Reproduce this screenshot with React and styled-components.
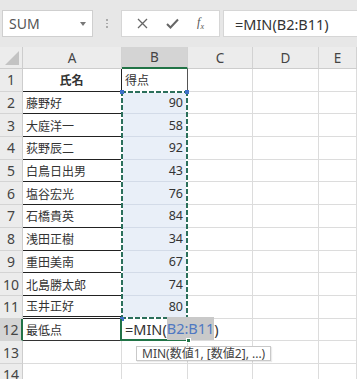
import React from "react";
import styled, { createGlobalStyle } from "styled-components";

const Global = createGlobalStyle`
  html, body { margin: 0; padding: 0; }
  body { font-family: "Noto Sans", "Noto Sans CJK JP", sans-serif; overflow: hidden; }
`;

const Page = styled.div`
  width: 357px;
  height: 379px;
  background: #e7e7e7;
  overflow: hidden;
  font-family: "Noto Sans", "Noto Sans CJK JP", sans-serif;
`;

const Bar = styled.div`
  display: flex;
  align-items: stretch;
  height: 27px;
  padding: 10px 0 0 2px;
`;

const NameBox = styled.div`
  box-sizing: border-box;
  width: 91px;
  display: flex;
  align-items: center;
  justify-content: space-between;
  padding: 0 6px 0 6px;
  background: #fff;
  border: 1px solid #cfcfcf;
  font-size: 14px;
  color: #555;
`;

const Caret = styled.span`
  width: 0;
  height: 0;
  border-left: 3px solid transparent;
  border-right: 3px solid transparent;
  border-top: 4px solid #777;
`;

const Grip = styled.div`
  width: 28px;
  display: flex;
  flex-direction: column;
  align-items: center;
  justify-content: center;
  gap: 2px;
  & > i { width: 1.5px; height: 1.5px; background: #aaa; display: block; }
`;

const Buttons = styled.div`
  box-sizing: border-box;
  width: 99px;
  display: flex;
  align-items: center;
  justify-content: space-around;
  padding: 0 6px;
  background: #fff;
  border: 1px solid #d6d6d6;
  color: #666;
`;

const Fx = styled.span`
  font-family: "Liberation Serif", serif;
  font-style: italic;
  font-size: 12px;
  color: #555;
  & > sub { font-size: 8px; }
`;

const Input = styled.div`
  box-sizing: border-box;
  flex: 1;
  margin-left: 3px;
  display: flex;
  align-items: center;
  padding-left: 11px;
  background: #fff;
  border: 1px solid #d6d6d6;
  border-right: none;
  font-size: 14.5px;
  color: #333;
`;

const Sheet = styled.div`
  margin-top: 10px;
  display: grid;
  grid-template-columns: 23px 99px 66px 65px 66px 1fr;
  grid-template-rows: 22px repeat(14, 22.7px);
  background: #fff;
`;

const Corner = styled.div`
  box-sizing: border-box;
  background: #ececec;
  border-right: 1px solid #cdcdcd;
  border-bottom: 1px solid #cdcdcd;
  display: flex;
  align-items: flex-end;
  justify-content: flex-end;
  padding: 0 3px 3px 0;
`;

const Tri = styled.span`
  width: 0;
  height: 0;
  border-left: 14px solid transparent;
  border-bottom: 14px solid #c3c3c3;
`;

const ColHead = styled.div`
  box-sizing: border-box;
  display: flex;
  align-items: center;
  justify-content: center;
  background: ${(p) => (p.$sel ? "#d4d4d4" : "#ececec")};
  border-right: 1px solid #d2d2d2;
  border-bottom: ${(p) => (p.$sel ? "2px solid #217346" : "1px solid #cdcdcd")};
  font-size: 13.5px;
  color: #444;
`;

const RowHead = styled.div`
  box-sizing: border-box;
  display: flex;
  align-items: center;
  justify-content: center;
  background: ${(p) => (p.$sel ? "#d4d4d4" : "#ececec")};
  border-right: ${(p) => (p.$sel ? "2px solid #217346" : "1px solid #cdcdcd")};
  border-bottom: 1px solid #d4d4d4;
  font-size: 14px;
  color: #444;
`;

const Cell = styled.div`
  box-sizing: border-box;
  position: ${(p) => (p.$anchor ? "relative" : "static")};
  display: flex;
  align-items: center;
  justify-content: ${(p) => (p.$align === "right" ? "flex-end" : p.$align === "center" ? "center" : "flex-start")};
  padding: 0 4px 0 3px;
  background: ${(p) => (p.$fill ? "#e9eff8" : "transparent")};
  border-right: 1px solid ${(p) => p.$rc || "#dcdcdc"};
  border-bottom: ${(p) => p.$bb || "1px solid #dcdcdc"};
  font-size: ${(p) => (p.$num ? "12.5px" : "12px")};
  font-weight: ${(p) => (p.$bold ? 700 : 400)};
  color: #333;
  white-space: nowrap;
  font-family: ${(p) => (p.$num ? "\"Noto Sans\", sans-serif" : "\"Noto Sans CJK JP\", sans-serif")};
`;

const EditCell = styled.div`
  box-sizing: border-box;
  position: relative;
  z-index: 2;
  margin-left: -2px;
  display: flex;
  align-items: center;
  padding-left: 3px;
  border-left: 2px solid #217346;
  border-bottom: 2px solid #217346;
  font-size: 14.5px;
  color: #333;
  white-space: nowrap;
  overflow: visible;
`;

const Ref = styled.span`
  color: #4f78c2;
  background: #c9c9c9;
  padding: 1px 0 2px;
`;

const FillHandle = styled.span`
  position: absolute;
  right: -3px;
  bottom: -4px;
  width: 5px;
  height: 5px;
  background: #217346;
  border: 1px solid #fff;
  box-sizing: border-box;
`;

const Tip = styled.div`
  position: absolute;
  left: 14px;
  top: 27px;
  height: 15px;
  box-sizing: border-box;
  padding: 0 5px;
  display: flex;
  align-items: center;
  background: #fff;
  border: 1px solid #c9c9c9;
  box-shadow: 1px 1px 1px rgba(0,0,0,0.08);
  font-size: 12px;
  color: #444;
  font-family: "Noto Sans", "Noto Sans CJK JP", sans-serif;
`;

const dash = "#2b6f5b";
const Ants = styled.div`
  position: absolute;
  z-index: 1;
  left: -1px;
  right: -1px;
  top: -1px;
  height: calc(10 * 22.7px + 1px);
  pointer-events: none;
  background:
    repeating-linear-gradient(90deg, ${dash} 0 5px, #fff 5px 7px) top left / 100% 2px no-repeat,
    repeating-linear-gradient(90deg, ${dash} 0 5px, #fff 5px 7px) bottom left / 100% 2px no-repeat,
    repeating-linear-gradient(180deg, ${dash} 0 5px, #fff 5px 7px) top left / 2px 100% no-repeat,
    repeating-linear-gradient(180deg, ${dash} 0 5px, #fff 5px 7px) top right / 2px 100% no-repeat;
`;

const Knob = styled.span`
  position: absolute;
  width: 4px;
  height: 4px;
  background: #3f70c8;
  ${(p) => (p.$top ? "top: -1px;" : "bottom: -2px;")}
  ${(p) => (p.$left ? "left: -1px;" : "right: -1px;")}
`;

const names = ["藤野好", "大庭洋一", "荻野辰二", "白鳥日出男", "塩谷宏光", "石橋貴英", "浅田正樹", "重田美南", "北島勝太郎", "玉井正好"];
const scores = [90, 58, 92, 43, 76, 84, 34, 67, 74, 80];
const cols = ["A", "B", "C", "D", "E"];

function Blank({ n }) {
  return Array.from({ length: n }, (_, i) => <Cell key={i} />);
}

export default function App() {
  const BLACK = "1px solid #222";
  return (
    <Page>
      <Global />
      <Bar>
        <NameBox>
          <span>SUM</span>
          <Caret />
        </NameBox>
        <Grip><i /><i /><i /></Grip>
        <Buttons>
          <svg width="11" height="11" viewBox="0 0 11 11"><path d="M1 1 L10 10 M10 1 L1 10" stroke="#666" strokeWidth="1.3" fill="none" /></svg>
          <svg width="13" height="11" viewBox="0 0 13 11"><path d="M1 6 L4.5 9.5 L12 1.5" stroke="#666" strokeWidth="2" fill="none" /></svg>
          <Fx>f<sub>x</sub></Fx>
        </Buttons>
        <Input>=MIN(B2:B11)</Input>
      </Bar>
      <Sheet>
        <Corner><Tri /></Corner>
        {cols.map((c) => <ColHead key={c} $sel={c === "B"}>{c}</ColHead>)}

        <RowHead>1</RowHead>
        <Cell $align="center" $bold $rc="#222" $bb={BLACK}>氏名</Cell>
        <Cell $rc="#555">得点</Cell>
        <Blank n={3} />

        {names.map((nm, i) => (
          <React.Fragment key={nm}>
            <RowHead>{i + 2}</RowHead>
            <Cell $rc="#222" $bb={i === 9 ? "3px double #222" : BLACK}>{nm}</Cell>
            <Cell $num $align="right" $fill $anchor={i === 0} $rc="#c9d3e3" $bb="1px solid #d3dbe8">
              {scores[i]}
              {i === 0 && (
                <Ants>
                  <Knob $top $left />
                  <Knob $top />
                  <Knob $left />
                  <Knob />
                </Ants>
              )}
            </Cell>
            <Blank n={3} />
          </React.Fragment>
        ))}

        <RowHead $sel>12</RowHead>
        <Cell $rc="#dcdcdc" $bb="1px solid #333">最低点</Cell>
        <EditCell>
          =MIN(<Ref>B2:B11</Ref>)
          <FillHandle />
          <Tip>MIN(数値1, [数値2], ...)</Tip>
        </EditCell>
        <Blank n={3} />

        <RowHead>13</RowHead>
        <Blank n={5} />
        <RowHead>14</RowHead>
        <Blank n={5} />
      </Sheet>
    </Page>
  );
}
